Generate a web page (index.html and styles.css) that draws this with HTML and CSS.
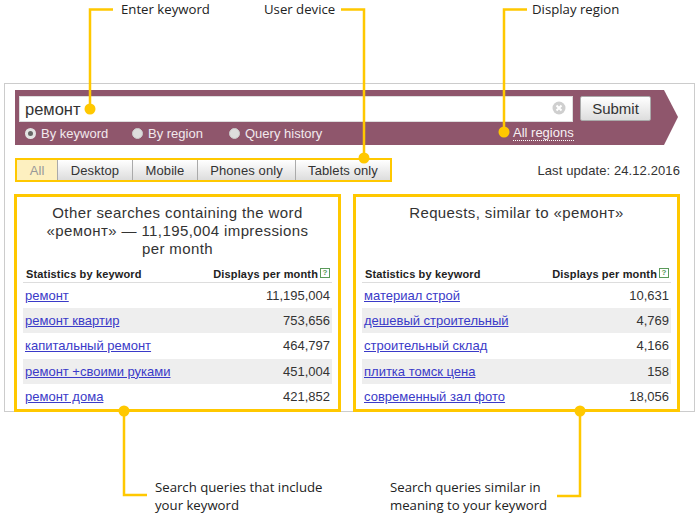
FILE: index.html
```html
<!DOCTYPE html>
<html lang="en">
<head>
    <meta charset="UTF-8">
    <meta name="viewport" content="width=device-width, initial-scale=1.0">
    <title>Keyword statistics</title>
    <link rel="stylesheet" href="styles.css">
</head>
<body>
    <div class="screen">
        <div class="panel">
            <div class="search-bar">
                <div class="search-row">
                    <div class="search-box">
                        <input class="search-input" type="text" value="ремонт">
                        <svg class="clear-icon" width="14" height="14" viewBox="0 0 14 14">
                            <circle cx="7" cy="7" r="6.5" fill="#cfcfcf"/>
                            <path d="M4.5 4.5l5 5M9.5 4.5l-5 5" stroke="#fff" stroke-width="2"/>
                        </svg>
                    </div>
                    <button class="submit-btn">Submit</button>
                </div>
                <div class="options-row">
                    <label class="option option-keyword"><span class="radio radio-on"></span>By keyword</label>
                    <label class="option option-region"><span class="radio"></span>By region</label>
                    <label class="option option-history"><span class="radio"></span>Query history</label>
                    <a class="all-regions" href="#">All regions</a>
                </div>
            </div>

            <div class="device-row">
                <div class="tabs">
                    <span class="tab tab-active tab-all">All</span>
                    <span class="tab tab-desktop">Desktop</span>
                    <span class="tab tab-mobile">Mobile</span>
                    <span class="tab tab-phones">Phones only</span>
                    <span class="tab tab-tablets">Tablets only</span>
                </div>
                <div class="last-update">Last update: 24.12.2016</div>
            </div>

            <div class="results">
                <div class="result-card">
                    <h2 class="card-title">Other searches containing the word «ремонт» — 11,195,004 impressions per month</h2>
                    <table class="stats">
                        <tr><th>Statistics by keyword</th><th class="num">Displays per month<span class="help">?</span></th></tr>
                        <tr><td><a href="#">ремонт</a></td><td class="num">11,195,004</td></tr>
                        <tr><td><a href="#">ремонт квартир</a></td><td class="num">753,656</td></tr>
                        <tr><td><a href="#">капитальный ремонт</a></td><td class="num">464,797</td></tr>
                        <tr><td><a href="#">ремонт +своими руками</a></td><td class="num">451,004</td></tr>
                        <tr><td><a href="#">ремонт дома</a></td><td class="num">421,852</td></tr>
                    </table>
                </div>
                <div class="result-card">
                    <h2 class="card-title">Requests, similar to «ремонт»</h2>
                    <table class="stats">
                        <tr><th>Statistics by keyword</th><th class="num">Displays per month<span class="help">?</span></th></tr>
                        <tr><td><a href="#">материал строй</a></td><td class="num">10,631</td></tr>
                        <tr><td><a href="#">дешевый строительный</a></td><td class="num">4,769</td></tr>
                        <tr><td><a href="#">строительный склад</a></td><td class="num">4,166</td></tr>
                        <tr><td><a href="#">плитка томск цена</a></td><td class="num">158</td></tr>
                        <tr><td><a href="#">современный зал фото</a></td><td class="num">18,056</td></tr>
                    </table>
                </div>
            </div>
        </div>

        <!-- callouts on top of the screenshot -->
        <svg class="callout-lines" width="698" height="515" viewBox="0 0 698 515">
            <g fill="none" stroke="#ffc800" stroke-width="2.5">
                <path d="M113 9.5H90V109"/>
                <path d="M341 9.5H364V158"/>
                <path d="M527 9.5H504V132"/>
                <path d="M124 411V495H147"/>
                <path d="M580 411V496H557"/>
            </g>
            <g fill="#ffc800">
                <circle cx="90" cy="109" r="5.5"/>
                <circle cx="364" cy="158" r="5.5"/>
                <circle cx="504" cy="132" r="5.5"/>
                <circle cx="124" cy="411" r="5.5"/>
                <circle cx="580" cy="411" r="5.5"/>
            </g>
        </svg>
        <div class="callout callout-enter">Enter keyword</div>
        <div class="callout callout-device">User device</div>
        <div class="callout callout-region">Display region</div>
        <div class="callout callout-include">Search queries that include<br>your keyword</div>
        <div class="callout callout-similar">Search queries similar in<br>meaning to your keyword</div>
    </div>
</body>
</html>
```

FILE: styles.css
```css
body {
    margin: 0;
    background-color: #fff;
    font-family: "Liberation Sans", Arial, sans-serif;
    font-size: 13px;
    color: #333;
}
.screen {
    position: relative;
    width: 698px;
    height: 515px;
    overflow: hidden;
    padding-top: 83px;
    box-sizing: border-box;
}
.panel {
    width: 691px;
    margin-left: 4px;
    box-sizing: border-box;
    padding: 6px 10px 0;
    border: 1px solid #ccc;
}
.search-bar {
    width: 663px;
    height: 55px;
    box-sizing: border-box;
    padding: 6px 0 0 4px;
    background-color: #8f566c;
    clip-path: polygon(0 0, 649px 0, 663px 27px, 649px 55px, 0 55px);
}
.search-row {
    display: flex;
    gap: 7px;
}
.search-box {
    display: flex;
    align-items: center;
    width: 554px;
    height: 26px;
    box-sizing: border-box;
    padding-right: 6px;
    background-color: #fff;
    border: 1px solid #ddd;
}
.search-input {
    flex: 1;
    min-width: 0;
    border: none;
    outline: none;
    padding: 0 0 0 5px;
    font-family: "Liberation Sans", Arial, sans-serif;
    font-size: 16.5px;
    color: #333;
}
.clear-icon {
    margin-bottom: 2px;
}
.submit-btn {
    width: 71px;
    height: 25px;
    padding: 0;
    border: 1px solid #aaa;
    border-radius: 2px;
    background: linear-gradient(#fff, #ddd);
    font-family: "Liberation Sans", Arial, sans-serif;
    font-size: 15px;
    color: #333;
}
.options-row {
    display: flex;
    align-items: center;
    height: 22px;
    color: #f2e9ed;
    margin-left: 6px;
}
.option {
    display: flex;
    align-items: center;
    gap: 5px;
}
.option-keyword {
    width: 107px;
}
.option-region {
    width: 97px;
}
.option-history {
    width: 284px;
}
.radio {
    width: 11px;
    height: 11px;
    box-sizing: border-box;
    border-radius: 50%;
    background-color: #ddd;
    border: 1px solid #ccc;
}
.radio-on {
    border: 3px solid #e4e4e4;
    background-color: #666;
}
.all-regions {
    color: #f7f0f3;
    text-decoration: none;
    border-bottom: 1px dotted #fff;
    line-height: 15px;
}
.device-row {
    display: flex;
    align-items: center;
    justify-content: space-between;
    margin-top: 13px;
    padding-right: 4px;
}
.tabs {
    display: flex;
    height: 24px;
    box-sizing: border-box;
    border: 2px solid #ffc800;
    letter-spacing: 0.1px;
}
.tab {
    display: flex;
    align-items: center;
    justify-content: center;
    box-sizing: border-box;
    background: linear-gradient(#fff, #ddd);
    border-left: 1px solid #aaa;
    color: #333;
}
.tab-active {
    background: #fdf0c0;
    border-left: none;
    color: #999;
}
.tab-all {
    width: 40px;
}
.tab-desktop {
    width: 75px;
}
.tab-mobile {
    width: 65px;
}
.tab-phones {
    width: 98px;
}
.tab-tablets {
    width: 95px;
}
.last-update {
    letter-spacing: 0.1px;
}
.results {
    display: flex;
    gap: 12px;
    margin: 12px 0 -1px -1px;
}
.result-card {
    width: 327px;
    height: 218px;
    box-sizing: border-box;
    padding: 7px 6px 0;
    background-color: #fff;
    border: 3px solid #ffc800;
}
.card-title {
    height: 58px;
    margin: 0;
    padding: 0 15px;
    font-size: 15px;
    font-weight: normal;
    line-height: 18px;
    text-align: center;
    letter-spacing: 0.4px;
}
.stats {
    width: 100%;
    border-collapse: collapse;
}
.stats th {
    height: 20px;
    padding: 4px 3px 0;
    box-sizing: border-box;
    font-size: 11px;
    text-align: left;
    letter-spacing: 0.15px;
    border-bottom: 1px solid #ddd;
    color: #222;
}
.stats th.num {
    text-align: right;
    padding-right: 2px;
}
.stats td {
    height: 25.4px;
    padding: 0 2px;
    font-size: 13px;
}
.stats tr:nth-child(odd) td {
    background-color: #eee;
}
.stats td.num {
    text-align: right;
}
.stats a {
    color: #3a3ac8;
}
.help {
    display: inline-block;
    width: 10px;
    height: 10px;
    margin-left: 2px;
    box-sizing: border-box;
    border: 1px solid #5a9a5a;
    font-size: 8px;
    line-height: 8px;
    text-align: center;
    vertical-align: top;
    color: #5a9a5a;
}
.callout-lines {
    position: absolute;
    left: 0;
    top: 0;
}
.callout {
    position: absolute;
    font-family: "Open Sans", sans-serif;
    font-size: 13.2px;
    line-height: 18px;
    color: #222;
    white-space: nowrap;
}
.callout-enter {
    left: 121px;
    top: 0;
}
.callout-device {
    left: 264px;
    top: 0;
}
.callout-region {
    left: 532px;
    top: 0;
}
.callout-include {
    left: 155px;
    top: 478px;
}
.callout-similar {
    left: 390px;
    top: 478px;
}
```
